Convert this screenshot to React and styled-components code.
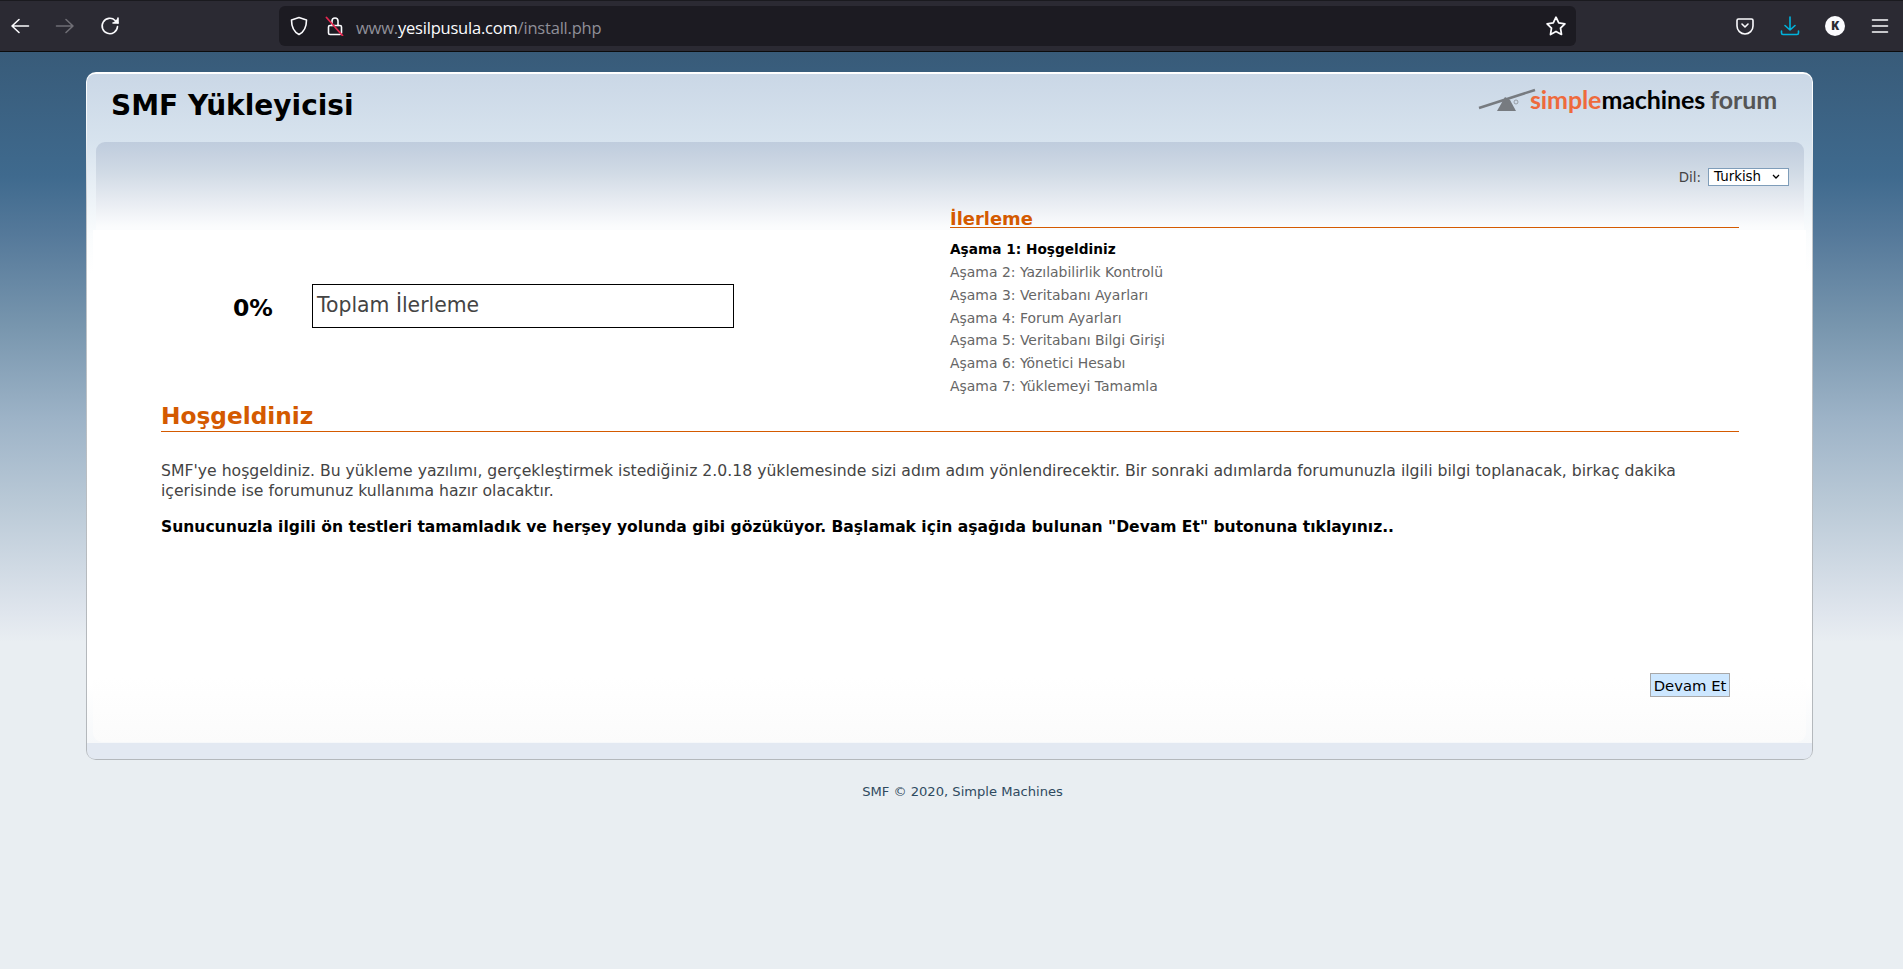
import React from "react";
import styled, { createGlobalStyle } from "styled-components";

const GlobalStyle = createGlobalStyle`
html, body { margin: 0; padding: 0; height: 100%; }
body {
  font-family: "DejaVu Sans", Verdana, sans-serif;
  overflow: hidden;
  background: #e9eef2;
}
`

const Toolbar = styled.div`
height: 52px;
box-sizing: border-box;
border-top: 1px solid #1a1a1f;
border-bottom: 1px solid #0c0c0d;
background: #2b2a33;
display: flex;
align-items: center;
padding: 0 0 1px 0;
`
const NavGroup = styled.div`
display: flex;
align-items: center;
gap: 25px;
width: 279px;
padding-left: 10px;
box-sizing: border-box;
`
const UrlBar = styled.div`
width: 1297px;
height: 40px;
background: #1c1b22;
border-radius: 6px;
display: flex;
align-items: center;
gap: 16px;
padding: 0 9px 0 10px;
box-sizing: border-box;
`
const UrlText = styled.div`
flex: 1;
margin: 3px 0 0 -5px;
font-family: "Open Sans", sans-serif;
font-size: 16.5px;
letter-spacing: -0.2px;
color: #8f8f98;
b { font-weight: 400; color: #fbfbfe; }
`
const ToolIcons = styled.div`
flex: 1;
display: flex;
align-items: center;
padding-left: 159px;
gap: 25px;
`
const Avatar = styled.div`
width: 20px;
height: 20px;
border-radius: 50%;
background: #fbfbfe;
color: #2b2a33;
font-family: "Open Sans", sans-serif;
font-weight: 800;
font-size: 12px;
display: flex;
align-items: center;
justify-content: center;
`
const Page = styled.div`
height: 917px;
box-sizing: border-box;
padding: 20px 90px 0 86px;
background: linear-gradient(to bottom, #385b79 0, #3f6a8e 124px, #55799a 183px, #7896ae 275px, #9db3c7 367px, #bccbd8 459px, #dfe5ed 560px, #e9eef2 590px);
`
const CardFrame = styled.div`
height: 688px;
box-sizing: border-box;
padding: 2px 1px 1px;
border-radius: 10px;
background: linear-gradient(to bottom, #fff 0, #f4f6f8 60px, #c4c8cc 130px, #b4b8bc 560px);
`
const Card = styled.div`
height: 100%;
box-sizing: border-box;
border-radius: 8px;
background: linear-gradient(to bottom, #cad7e6 0, #d7e3ee 68px, #fafcfd 160px, #fff 200px, #fff 610px, #f6f8fa 669px, #e3e9f2 669px, #e3e9f2 100%);
padding: 0 6px 17px 6px;
display: flex;
flex-direction: column;
`
const Header = styled.div`
height: 68px;
flex: none;
display: flex;
align-items: flex-start;
justify-content: space-between;
padding: 12px 29px 0 18px;
box-sizing: border-box;
`
const Title = styled.h1`
margin: 0;
font-size: 28px;
line-height: 40px;
font-weight: 700;
color: #000;
`
const Logo = styled.div`
display: flex;
align-items: center;
margin-top: -1px;
svg { margin-right: -13px; }
`
const LogoText = styled.div`
font-family: "Lato", sans-serif;
font-size: 25px;
font-weight: 700;
letter-spacing: -0.1px;
margin: -1px 0 0 7px;
color: #000;
i { font-style: normal; color: #ee6a3c; }
u { text-decoration: none; color: #555; margin-left: 5px; }
`
const Panel = styled.div`
flex: 1;
position: relative;
border-radius: 9px;
background: linear-gradient(to bottom, transparent 0, transparent 88px, #fff 88px, #fff 535px, #fbfbfb 600px);
padding: 26px 17px 0 0;
display: flex;
flex-direction: column;
&::before {
  content: "";
  position: absolute;
  top: 0;
  left: 3px;
  right: 2px;
  height: 88px;
  border-radius: 9px 9px 0 0;
  background: linear-gradient(to bottom, #bfccdd 0, #d0dae5 30px, #e8ecf2 60px, #fbfcfd 85px);
}
& > * { position: relative; }
`
const LangRow = styled.div`
display: flex;
justify-content: flex-end;
align-items: center;
gap: 7px;
height: 18px;
font-size: 13.4px;
color: #444;
`
const Select = styled.div`
width: 81px;
height: 18px;
box-sizing: border-box;
border: 1px solid #7f9db9;
background: #fff;
color: #000;
font-size: 13.4px;
line-height: 16px;
padding-left: 5px;
display: flex;
align-items: center;
justify-content: space-between;
svg { margin-right: 8px; }
`
const Columns = styled.div`
display: flex;
height: 215px;
margin-right: 50px;
`
const ProgressSide = styled.div`
width: 857px;
display: flex;
align-items: flex-start;
padding: 98px 0 0 140px;
box-sizing: border-box;
`
const Percent = styled.div`
width: 79px;
font-size: 23.5px;
font-weight: 700;
color: #000;
line-height: 49px;
`
const ProgressBox = styled.div`
width: 422px;
height: 44px;
box-sizing: border-box;
border: 1px solid #000;
padding-left: 4px;
font-size: 20.4px;
line-height: 40px;
color: #444;
`
const StepsSide = styled.div`
flex: 1;
padding-top: 25px;
`
const StepsTitle = styled.h2`
margin: 0;
font-size: 17.9px;
line-height: 16px;
font-weight: 700;
color: #d45a00;
border-bottom: 1px solid #d45a00;
`
const StepList = styled.div`
margin-top: 10px;
`
const Step = styled.div`
font-size: ${p => (p.$active ? "13.7px" : "13.95px")};
line-height: 22.85px;
font-weight: ${p => (p.$active ? 700 : 400)};
color: ${p => (p.$active ? "#000" : "#666")};
`
const Section = styled.div`
margin: 0 50px 0 68px;
flex: 1;
`
const SectionTitle = styled.h2`
margin: 0;
font-size: 23.25px;
line-height: 30px;
font-weight: 700;
color: #d45a00;
border-bottom: 1px solid #d45a00;
`
const Para = styled.p`
margin: 29px 0 0;
font-size: 15.66px;
line-height: 20px;
color: #444;
`
const BoldPara = styled.p`
margin: 16px 0 0;
font-size: 15.55px;
line-height: 20px;
font-weight: 700;
color: #000;
`
const ButtonRow = styled.div`
display: flex;
justify-content: flex-end;
padding-right: 59px;
margin-bottom: 45px;
`
const Button = styled.button`
width: 80px;
height: 24px;
padding: 0;
box-sizing: border-box;
border: 1px solid #a8a8a8;
background: #cde7ff;
color: #000;
font-family: inherit;
font-size: 14.8px;
white-space: nowrap;
`
const Footer = styled.div`
margin: 23px 0 0 26px;
text-align: center;
font-size: 13.1px;
line-height: 18px;
color: #2f4a60;
`

const Ic = ({ children, c = "#fbfbfe", s = 20, w = 1.6 }) => (
  <svg width={s} height={s} viewBox="0 0 20 20" fill="none" stroke={c} strokeWidth={w} strokeLinecap="round" strokeLinejoin="round">
    {children}
  </svg>
)

export default function App() {
  const steps = [
    "Aşama 1: Hoşgeldiniz",
    "Aşama 2: Yazılabilirlik Kontrolü",
    "Aşama 3: Veritabanı Ayarları",
    "Aşama 4: Forum Ayarları",
    "Aşama 5: Veritabanı Bilgi Girişi",
    "Aşama 6: Yönetici Hesabı",
    "Aşama 7: Yüklemeyi Tamamla",
  ]
  return (
    <>
      <GlobalStyle />
      <Toolbar>
        <NavGroup>
          <Ic><path d="M18.500 10H2M9 3.500L2 10l7 6.500" /></Ic>
          <Ic c="#6f6e75"><path d="M1.500 10H18M11 3.500l7 6.500-7 6.500" /></Ic>
          <Ic><path d="M17.500 10.500a7.700 7.700 0 1 1-2.300-6L18 7" /><path d="M18 2v5h-5" fill="#fbfbfe" /></Ic>
        </NavGroup>
        <UrlBar>
          <Ic><path d="M10 1.500l7.500 2.400c0 7-1.700 11.500-7.500 14.600C4.200 15.400 2.500 10.900 2.500 3.900z" /></Ic>
          <Ic>
            <path d="M7 9.500V5a3 3 0 0 1 6 0v4.500" />
            <rect x="3.500" y="9.500" width="13" height="9" rx="1.500" />
            <path d="M1.500 1.500l16 18" stroke="#e22850" strokeWidth="1.800" />
          </Ic>
          <UrlText>www.<b>yesilpusula.com</b>/install.php</UrlText>
          <Ic s={22}><path d="M10 2l2.500 5.200 5.600.8-4 4 .9 5.700L10 15l-5 2.700.9-5.700-4-4 5.600-.8z" /></Ic>
        </UrlBar>
        <ToolIcons>
          <Ic><path d="M3.500 3h13a1.500 1.500 0 0 1 1.500 1.500V10a8 8 0 0 1-16 0V4.500A1.500 1.500 0 0 1 3.500 3z" /><path d="M7 8l3 3 3-3" /></Ic>
          <Ic c="#00b3dc"><path d="M10 1v13M5 9.500l5 4.500 5-4.500M1.500 15v2a1.500 1.500 0 0 0 1.500 1.500h14a1.500 1.500 0 0 0 1.500-1.500v-2" /></Ic>
          <Avatar>K</Avatar>
          <Ic><path d="M2.500 4h15M2.500 10h15M2.500 16h15" /></Ic>
        </ToolIcons>
      </Toolbar>
      <Page>
        <CardFrame>
          <Card>
            <Header>
              <Title>SMF Yükleyicisi</Title>
              <Logo>
                <svg width="58" height="26" viewBox="0 0 58 26">
                  <path d="M1 21L57 3" stroke="#777b80" strokeWidth="2.500" />
                  <path d="M19 24l8-14 5 3 6 11z" fill="#777b80" />
                  <circle cx="38" cy="15" r="2" fill="none" stroke="#8a8e93" strokeWidth="0.800" />
                </svg>
                <LogoText><i>simple</i>machines<u>forum</u></LogoText>
              </Logo>
            </Header>
            <Panel>
              <LangRow>
                <span>Dil:</span>
                <Select>
                  <span>Turkish</span>
                  <svg width="8" height="6" viewBox="0 0 8 6"><path d="M1 1l3 3 3-3" fill="none" stroke="#000" strokeWidth="1.300" /></svg>
                </Select>
              </LangRow>
              <Columns>
                <ProgressSide>
                  <Percent>0%</Percent>
                  <ProgressBox>Toplam İlerleme</ProgressBox>
                </ProgressSide>
                <StepsSide>
                  <StepsTitle>İlerleme</StepsTitle>
                  <StepList>
                    {steps.map((s, i) => (
                      <Step key={s} $active={i === 0}>{s}</Step>
                    ))}
                  </StepList>
                </StepsSide>
              </Columns>
              <Section>
                <SectionTitle>Hoşgeldiniz</SectionTitle>
                <Para>
                  SMF'ye hoşgeldiniz. Bu yükleme yazılımı, gerçekleştirmek istediğiniz 2.0.18 yüklemesinde sizi adım adım yönlendirecektir. Bir sonraki adımlarda forumunuzla ilgili bilgi toplanacak, birkaç dakika içerisinde ise forumunuz kullanıma hazır olacaktır.
                </Para>
                <BoldPara>
                  Sunucunuzla ilgili ön testleri tamamladık ve herşey yolunda gibi gözüküyor. Başlamak için aşağıda bulunan "Devam Et" butonuna tıklayınız..
                </BoldPara>
              </Section>
              <ButtonRow>
                <Button>Devam Et</Button>
              </ButtonRow>
            </Panel>
          </Card>
        </CardFrame>
        <Footer>SMF © 2020, Simple Machines</Footer>
      </Page>
    </>
  )
}
